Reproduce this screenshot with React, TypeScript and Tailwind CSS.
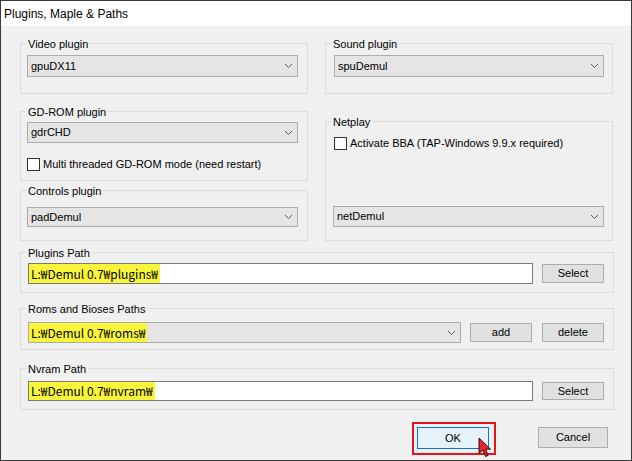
import React from 'react'

const ui = "font-['Liberation_Sans','Lato',sans-serif] text-[11px] text-black"
const pathFont = "font-['Noto_Sans_CJK_KR','Liberation_Sans',sans-serif] text-[12px]"

function Group({ label, className, children }: { label: string; className: string; children?: React.ReactNode }) {
  return (
    <div className={`border border-[#dcdcdc] ${className}`}>
      <div className="-mt-[8px] ml-[5px] w-fit bg-[#f0f0f0] px-[2px] leading-[16px]">{label}</div>
      {children}
    </div>
  )
}

function Chevron() {
  return (
    <svg width="9" height="6" viewBox="0 0 9 6" className="shrink-0">
      <polyline points="1,1 4.5,4.5 8,1" fill="none" stroke="#5a5a5a" strokeWidth="1" />
    </svg>
  )
}

function Combo({ value, className, children }: { value?: string; className: string; children?: React.ReactNode }) {
  return (
    <div className={`flex items-center border border-[#acacac] bg-[#e5e5e5] pr-[4px] ${className}`}>
      {children ?? <span className="flex-1 pl-[3px]">{value}</span>}
      <Chevron />
    </div>
  )
}

function Btn({ label, className }: { label: string; className: string }) {
  return (
    <button className={`flex items-center justify-center border border-[#adadad] bg-[#e1e1e1] ${className}`}>
      {label}
    </button>
  )
}

function Check({ label }: { label: string }) {
  return (
    <div className="flex items-center gap-[3px]">
      <span className="h-[13px] w-[13px] border border-[#333] bg-white" />
      <span className="leading-[13px]">{label}</span>
    </div>
  )
}

function PathText({ text }: { text: string }) {
  return (
    <span className={`flex items-center self-stretch bg-[#f9f53a] px-[2px] ${pathFont}`}>{text}</span>
  )
}

export default function App() {
  return (
    <div className={`relative h-[461px] w-[632px] overflow-hidden border border-[#3a3a3a] bg-[#f0f0f0] ${ui}`}>
      <div className="flex h-[25px] items-center bg-white pl-[3px] text-[12px]">Plugins, Maple &amp; Paths</div>

      <div className="pl-[19px]">
        <div className="grid grid-cols-[288px_288px] gap-x-[17px]">
          <div className="flex flex-col">
            <Group label="Video plugin" className="mt-[17px] h-[51px]">
              <Combo value="gpuDX11" className="ml-[6px] mt-[3px] h-[22px] w-[271px]" />
            </Group>
            <Group label="GD-ROM plugin" className="mt-[17px] h-[70px]">
              <Combo value="gdrCHD" className="ml-[6px] mt-[2px] h-[21px] w-[271px]" />
              <div className="ml-[6px] mt-[15px]">
                <Check label="Multi threaded GD-ROM mode (need restart)" />
              </div>
            </Group>
            <Group label="Controls plugin" className="mt-[9px] h-[51px]">
              <Combo value="padDemul" className="ml-[6px] mt-[8px] h-[20px] w-[271px]" />
            </Group>
          </div>
          <div className="flex flex-col">
            <Group label="Sound plugin" className="mt-[17px] h-[51px]">
              <Combo value="spuDemul" className="ml-[8px] mt-[3px] h-[22px] w-[270px]" />
            </Group>
            <Group label="Netplay" className="mt-[27px] h-[120px]">
              <div className="ml-[8px] mt-[7px]">
                <Check label="Activate BBA (TAP-Windows 9.9.x required)" />
              </div>
              <Combo value="netDemul" className="ml-[7px] mt-[56px] h-[21px] w-[271px]" />
            </Group>
          </div>
        </div>

        <Group label="Plugins Path" className="mt-[11px] h-[41px] w-[594px]">
          <div className="ml-[7px] mt-[2px] flex items-center">
            <div className="flex h-[21px] w-[505px] border border-[#7a7a7a] bg-white">
              <PathText text="L:₩Demul 0.7₩plugins₩" />
            </div>
            <Btn label="Select" className="ml-[9px] h-[19px] w-[62px]" />
          </div>
        </Group>

        <Group label="Roms and Bioses Paths" className="mt-[15px] h-[42px] w-[594px]">
          <div className="ml-[7px] mt-[5px] flex items-center">
            <Combo className="h-[21px] w-[433px]">
              <div className="flex flex-1 self-stretch">
                <PathText text="L:₩Demul 0.7₩roms₩" />
              </div>
            </Combo>
            <Btn label="add" className="ml-[9px] h-[19px] w-[62px]" />
            <Btn label="delete" className="ml-[10px] h-[19px] w-[62px]" />
          </div>
        </Group>

        <Group label="Nvram Path" className="mt-[18px] h-[42px] w-[594px]">
          <div className="ml-[7px] mt-[4px] flex items-center">
            <div className="flex h-[20px] w-[505px] border border-[#7a7a7a] bg-white">
              <PathText text="L:₩Demul 0.7₩nvram₩" />
            </div>
            <Btn label="Select" className="ml-[9px] h-[18px] w-[62px]" />
          </div>
        </Group>

        <div className="mt-[12px] flex w-[594px] items-start justify-end pr-[6px]">
          <div className="border-2 border-[#e8141c] pb-[4px] pl-[3px] pr-[5px] pt-[3px]">
            <button className="flex h-[22px] w-[72px] items-center justify-center border border-[#0078d7] bg-[#e5f1fb]">OK</button>
          </div>
          <Btn label="Cancel" className="ml-[42px] mt-[5px] h-[21px] w-[70px]" />
        </div>
      </div>

      <svg width="16" height="21" viewBox="0 0 16 21" className="absolute left-[477px] top-[436px]">
        <path d="M1 1 L1 16.5 L4.8 13 L7.6 19.5 L10.2 18.4 L7.5 12.2 L12.6 12.2 Z" fill="#e3242b" stroke="#3b0b0b" strokeWidth="1" strokeLinejoin="round" />
      </svg>
    </div>
  )
}
